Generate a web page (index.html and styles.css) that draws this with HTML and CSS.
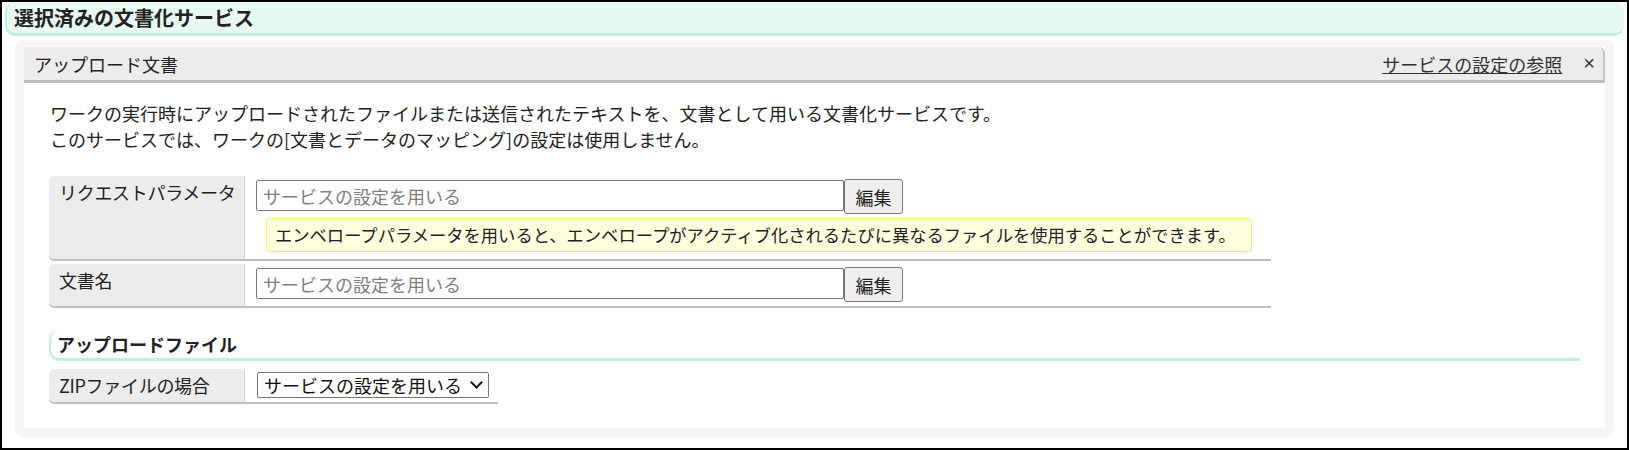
FILE: index.html
```html
<!DOCTYPE html>
<html lang="ja">
<head>
    <meta charset="UTF-8">
    <meta name="viewport" content="width=device-width, initial-scale=1.0">
    <title>選択済みの文書化サービス</title>
    <link rel="stylesheet" href="styles.css">
</head>
<body>
    <div class="frame">
        <div class="page-title">選択済みの文書化サービス</div>

        <div class="service-box">
            <div class="panel">
                <div class="panel-head">
                    <span class="panel-name">アップロード文書</span>
                    <a class="panel-link" href="#">サービスの設定の参照</a>
                    <span class="panel-close">×</span>
                </div>

                <div class="panel-body">
                    <p class="desc">
                        ワークの実行時にアップロードされたファイルまたは送信されたテキストを、文書として用いる文書化サービスです。<br>
                        このサービスでは、ワークの[文書とデータのマッピング]の設定は使用しません。
                    </p>

                    <div class="form-table wide">
                        <div class="form-row">
                            <div class="form-label">リクエストパラメータ</div>
                            <div class="form-value">
                                <div class="field">
                                    <input class="text-input" type="text" placeholder="サービスの設定を用いる">
                                    <button class="edit-button">編集</button>
                                </div>
                                <div class="note">エンベロープパラメータを用いると、エンベロープがアクティブ化されるたびに異なるファイルを使用することができます。</div>
                            </div>
                        </div>
                        <div class="form-row">
                            <div class="form-label">文書名</div>
                            <div class="form-value">
                                <div class="field">
                                    <input class="text-input" type="text" placeholder="サービスの設定を用いる">
                                    <button class="edit-button">編集</button>
                                </div>
                            </div>
                        </div>
                    </div>

                    <h3 class="section-title">アップロードファイル</h3>

                    <div class="form-table narrow">
                        <div class="form-row">
                            <div class="form-label">ZIPファイルの場合</div>
                            <div class="form-value">
                                <span class="select-wrap">
                                    <select class="select-input">
                                        <option>サービスの設定を用いる</option>
                                        <option>展開する</option>
                                        <option>展開しない</option>
                                    </select>
                                </span>
                            </div>
                        </div>
                    </div>
                </div>
            </div>
        </div>
    </div>
</body>
</html>
```

FILE: styles.css
```css
body {
    margin: 0;
    font-family: "Noto Sans CJK JP", "Noto Sans", sans-serif;
    color: #222;
    background: white;
}
.frame {
    width: 1629px;
    height: 450px;
    box-sizing: border-box;
    border: 2px solid #000;
    background: white;
}
.page-title {
    margin: 0 3px;
    height: 31px;
    line-height: 31px;
    padding-left: 7px;
    font-size: 20px;
    font-weight: bold;
    background: #e8f8f2;
    border-left: 2px solid #c1eedf;
    border-bottom: 3px solid #c1eedf;
    border-radius: 10px;
}
.service-box {
    margin: 4px 13px 0;
    padding: 7px 9px 9px;
    background: #f6f6f6;
    border-radius: 8px;
}
.panel {
    background: white;
}
.panel-head {
    display: flex;
    align-items: center;
    height: 33px;
    padding: 0 8px 0 10px;
    font-size: 18px;
    background: #ececec;
    border-bottom: 3px solid #bdbdbd;
    border-right: 2px solid #c6c6c6;
    border-top-right-radius: 6px;
}
.panel-name {
    flex: 1;
}
.panel-link {
    color: #333;
    text-decoration: underline;
}
.panel-close {
    margin-left: 21px;
    font-family: "Liberation Sans", sans-serif;
    font-size: 20px;
    color: #333;
}
.panel-body {
    padding: 18px 25px 26px;
}
.desc {
    margin: 0 0 24px 1px;
    font-size: 18px;
    line-height: 25.5px;
}
.form-table.wide {
    width: 1222px;
}
.form-table.narrow {
    width: 449px;
}
.form-row {
    display: flex;
    border-radius: 5px 0 0 5px;
    box-shadow: 0 2px 0 #bfbfbf;
}
.form-row + .form-row {
    margin-top: 5px;
}
.form-label {
    width: 175px;
    flex-shrink: 0;
    padding: 4px 10px 5px;
    font-size: 18px;
    line-height: 24px;
    white-space: nowrap;
    letter-spacing: -0.3px;
    background: #ececec;
    border-right: 1px solid #d4d4d4;
    border-radius: 5px 0 0 5px;
}
.form-value {
    flex: 1;
    padding: 3px 9px 4px 11px;
}
.field {
    display: flex;
    align-items: flex-start;
}
.text-input {
    width: 588px;
    height: 31px;
    margin-top: 1px;
    box-sizing: border-box;
    padding: 0 6px;
    border: 1px solid #767676;
    border-radius: 2px;
    font-family: "Noto Sans CJK JP", "Noto Sans", sans-serif;
    font-size: 18px;
    color: #222;
}
.text-input::placeholder {
    color: #808080;
}
.edit-button {
    width: 59px;
    height: 35px;
    padding: 0;
    background: #efefef;
    border: 1px solid #767676;
    border-radius: 3px;
    font-family: "Noto Sans CJK JP", "Noto Sans", sans-serif;
    font-size: 18px;
    color: #222;
}
.note {
    width: 986px;
    box-sizing: border-box;
    margin: 4px 0 3px 10px;
    height: 34px;
    line-height: 32px;
    padding: 0 8px;
    font-size: 17.3px;
    background: #ffffe0;
    border: 1px dotted #dede1a;
    border-radius: 4px;
}
.section-title {
    margin: 24px 0 8px;
    height: 28px;
    line-height: 28px;
    padding-left: 6px;
    font-size: 18px;
    font-weight: bold;
    border-left: 2px solid #c1eedf;
    border-bottom: 3px solid #c1eedf;
    border-radius: 10px 0 0 10px;
}
.select-wrap {
    position: relative;
    display: inline-block;
    margin-left: 1px;
}
.select-wrap::after {
    content: "";
    position: absolute;
    right: 8px;
    top: 6px;
    width: 7px;
    height: 7px;
    border-right: 2px solid #111;
    border-bottom: 2px solid #111;
    transform: rotate(45deg);
    pointer-events: none;
}
.select-input {
    appearance: none;
    width: 232px;
    height: 26px;
    padding: 0 0 0 6px;
    background: white;
    border: 1px solid #767676;
    border-radius: 2px;
    font-family: "Noto Sans CJK JP", "Noto Sans", sans-serif;
    font-size: 18px;
    line-height: 24px;
    color: #111;
}
```
